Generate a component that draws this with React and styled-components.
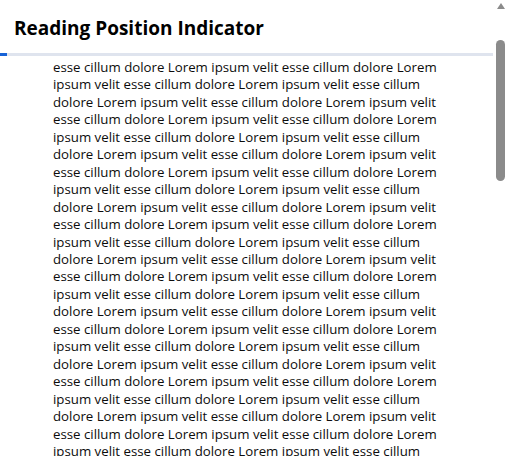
import styled, { createGlobalStyle } from "styled-components"

const GlobalStyle = createGlobalStyle`
    html, body {
        margin: 0;
        padding: 0;
        background: #ffffff;
    }

    body {
        font-family: "Open Sans", "Noto Sans", Arial, sans-serif;
        color: #0c0c0c;
    }
`

const Page = styled.div`
    display: flex;
    height: 100vh;
    overflow: hidden;
`

const Main = styled.div`
    flex: 1;
    min-width: 0;
    display: flex;
    flex-direction: column;
    overflow: hidden;
`

const Header = styled.header`
    flex: none;
    background: #ffffff;
    padding-top: 16px;
`

const Title = styled.h1`
    margin: 0 0 13px 14px;
    font-size: 19px;
    line-height: 24px;
    font-weight: 700;
    color: #000000;
`

const Track = styled.div`
    height: 3px;
    background: #dfe4ee;
`

const Fill = styled.div`
    height: 100%;
    background: #1662d6;
`

const Article = styled.main`
    flex: 1;
    min-height: 0;
    overflow: hidden;
    width: 396px;
    margin-left: 53px;
    padding-top: 3px;
    font-size: 13.25px;
    line-height: 17.45px;
`

const Paragraph = styled.p`
    margin: 0;
`

const ScrollRail = styled.div`
    flex: none;
    width: 15px;
    display: flex;
    flex-direction: column;
    align-items: center;
`

const ArrowUp = styled.div`
    width: 0;
    height: 0;
    margin-top: 3px;
    border-left: 4.5px solid transparent;
    border-right: 4.5px solid transparent;
    border-bottom: 6px solid #8b8b8b;
`

const Thumb = styled.div`
    width: 9px;
    height: ${(p) => p.$size}px;
    margin-top: ${(p) => p.$offset}px;
    border-radius: 5px;
    background: #8b8b8b;
`

const words = ["Lorem", "ipsum", "velit", "esse", "cillum", "dolore"]
const text = Array.from({ length: 300 }, (_, i) => words[(i + 3) % 6]).join(" ")

const App = () => {
    return (
        <>
            <GlobalStyle />
            <Page>
                <Main>
                    <Header>
                        <Title>Reading Position Indicator</Title>
                        <Track>
                            <Fill style={{ width: "1.45%" }} />
                        </Track>
                    </Header>
                    <Article>
                        <Paragraph>{text}</Paragraph>
                    </Article>
                </Main>
                <ScrollRail>
                    <ArrowUp />
                    <Thumb $offset={31} $size={141} />
                </ScrollRail>
            </Page>
        </>
    )
}

export default App
